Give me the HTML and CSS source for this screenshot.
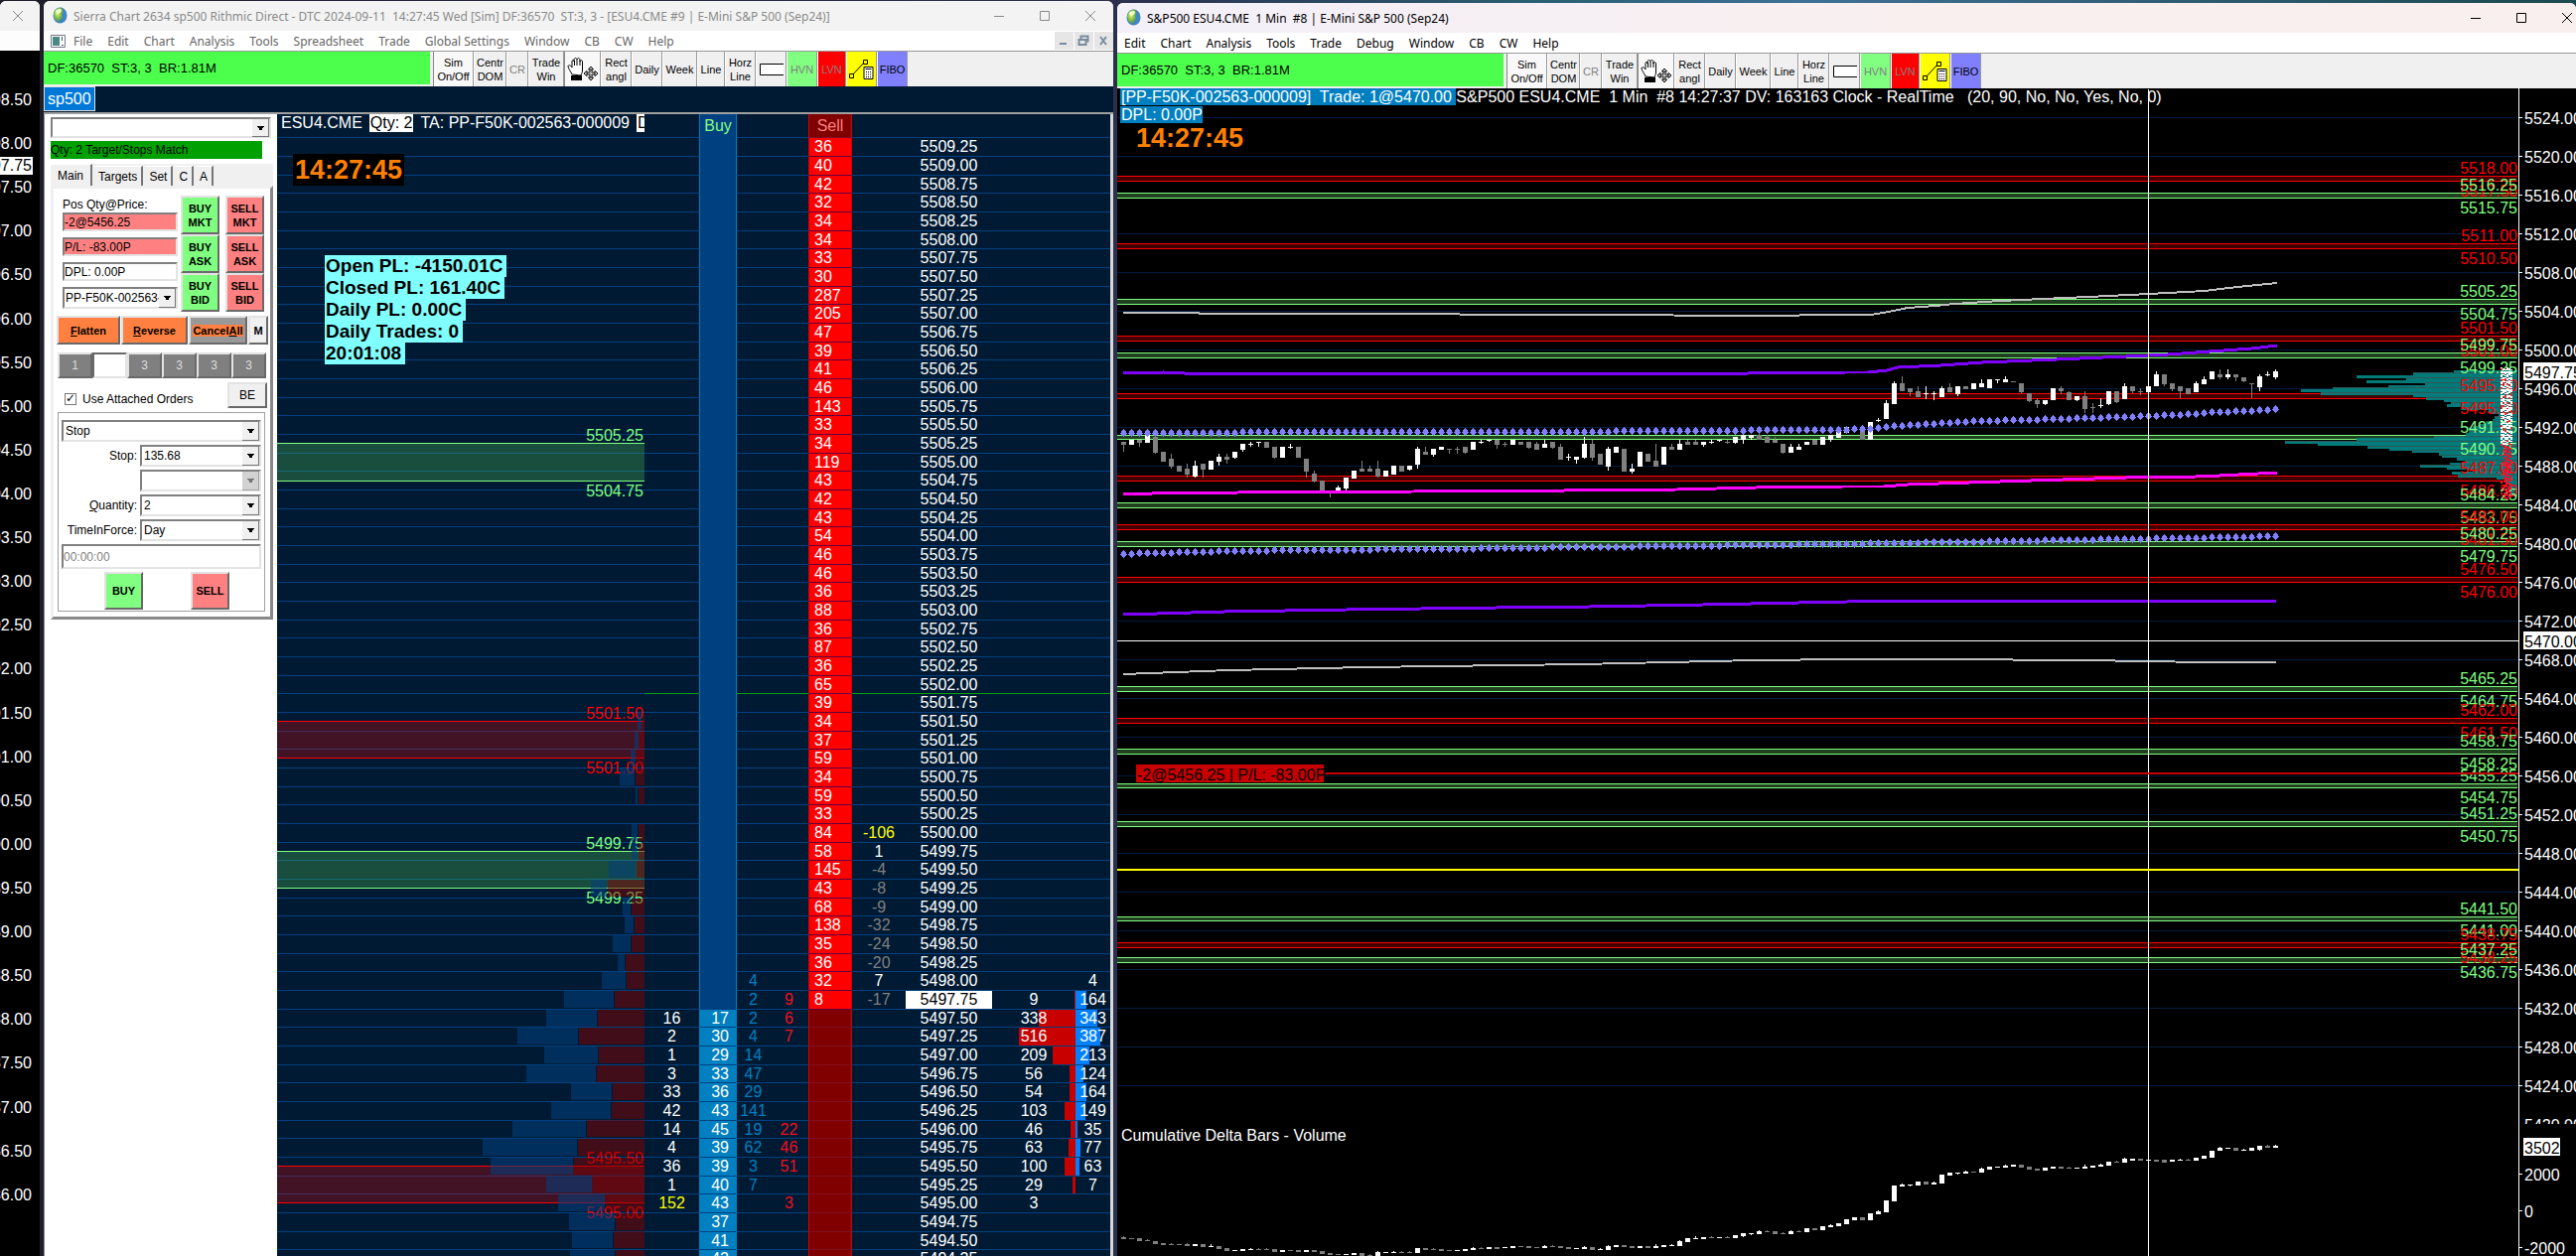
FILE: index.html
```html
<!DOCTYPE html>
<html lang="en">
<head>
<meta charset="utf-8">
<title>Sierra Chart</title>
<link rel="stylesheet" href="styles.css">
</head>
<body>
<svg class="defs" aria-hidden="true">
  <defs>
    <radialGradient id="globe-fill" cx=".4" cy=".35" r=".7"><stop offset="0" stop-color="#e8f8a0"/><stop offset=".45" stop-color="#8cc63f"/><stop offset="1" stop-color="#2f6db5"/></radialGradient>
    <symbol id="globe" viewBox="0 0 16 18"><ellipse cx="8.500" cy="8.500" rx="7" ry="8" fill="#3f86c9"/><path d="M2 7c1-5 5-7 9-6 2 2 1 5-1 6 2 2 1 6-2 9-4-1-6-5-6-9z" fill="url(#globe-fill)"/><path d="M4 4c2-2 5-3 6-1 0 2-3 4-5 4z" fill="#f3ffc8"/></symbol>
    <symbol id="hand" viewBox="0 0 32 26"><path d="M5 18C4 15 1 12 1 9.500 2 8 4 9 5 11V5c0-2 2-2 2 0V3c.5-2 2.500-2 3 0 .5-2 2.500-2 3 0v2c.5-2 2.500-1.500 2.500 0v9c0 2-1 3-1.500 5z" fill="#fff" stroke="#000"/><path d="M7.500 4v5M10 3v6M13 4v5" stroke="#000" fill="none"/><path d="M4 19h11v5H4z"/><path d="M24 11v12M18 17h12" stroke="#000" stroke-width="3"/><path d="M24 11v12M18 17h12" stroke="#fff"/><path d="M24 10l-2.500 3h5zM24 24l-2.500-3h5zM17 17l3-2.500v5zM31 17l-3-2.500v5z" fill="#fff" stroke="#000"/></symbol>
    <symbol id="box" viewBox="0 0 24 12"><path d="M24 .5H.5v11H24" fill="#fff" stroke="#000"/></symbol>
    <symbol id="calc" viewBox="0 0 26 22"><path d="M2 18L16 3" stroke="#000"/><path d="M.5 15.500h4v4h-4zM14.500 1.500h4v4h-4z" fill="#ff0" stroke="#000"/><path d="M15 8.500h9v12h-9z" fill="#fff" stroke="#000"/><path d="M16.500 10.500h6M17 13.500h1m1 0h1m1 0h1M17 16h1m1 0h1m1 0h1M17 18.500h1m1 0h1m1 0h1" stroke="#000"/></symbol>
    <symbol id="min" viewBox="0 0 12 12"><path d="M1 6.500h10" stroke="currentColor"/></symbol>
    <symbol id="max" viewBox="0 0 12 12"><path d="M1.500 1.500h9v9h-9z" stroke="currentColor" fill="none"/></symbol>
    <symbol id="close" viewBox="0 0 12 12"><path d="M1 1l10 10M11 1L1 11" stroke="currentColor"/></symbol>
    <symbol id="restore" viewBox="0 0 12 12"><path d="M3.500 4V1.500h7v5H8M1.500 5h7v5h-7z" stroke="currentColor" fill="none" stroke-width="2"/></symbol>
  </defs>
</svg>

<main class="desktop">
  <aside class="window sliver">
    <header class="titlebar"><svg class="glyph"><use href="#close"/></svg></header>
    <div class="sliver-menu"></div>
    <div class="sliver-scale">
      <ol id="sliver-labels"></ol>
      <span class="last-price">5497.75</span>
    </div>
  </aside>

  <section class="window trade-window">
    <header class="titlebar">
      <svg class="globe"><use href="#globe"/></svg>
      <h1>Sierra Chart 2634 sp500 Rithmic Direct - DTC 2024-09-11  14:27:45 Wed [Sim] DF:36570  ST:3, 3 - [ESU4.CME #9 | E-Mini S&amp;P 500 (Sep24)]</h1>
      <div class="window-controls">
        <button aria-label="Minimize"><svg class="glyph"><use href="#min"/></svg></button>
        <button aria-label="Maximize"><svg class="glyph"><use href="#max"/></svg></button>
        <button aria-label="Close"><svg class="glyph"><use href="#close"/></svg></button>
      </div>
    </header>
    <nav class="menubar">
      <svg class="doc" viewBox="0 0 15 13"><path d="M.5.5h14v12H.5z" fill="#fff" stroke="#778"/><path d="M2 2h7v9H2z" fill="#4a8a86"/><path d="M11 2h1v4h-1zM11 10h2v1h-2z" fill="#456"/></svg>
      <a href="#">File</a><a href="#">Edit</a><a href="#">Chart</a><a href="#">Analysis</a><a href="#">Tools</a><a href="#">Spreadsheet</a><a href="#">Trade</a><a href="#">Global Settings</a><a href="#">Window</a><a href="#">CB</a><a href="#">CW</a><a href="#">Help</a>
      <div class="child-controls">
        <button aria-label="Minimize chart"><svg class="glyph"><path d="M2 9h7" stroke="currentColor" stroke-width="2"/></svg></button>
        <button aria-label="Restore chart"><svg class="glyph"><use href="#restore"/></svg></button>
        <button aria-label="Close chart"><svg class="glyph"><path d="M3 2l6 8M9 2l-6 8" stroke="currentColor" stroke-width="2"/></svg></button>
      </div>
    </nav>
    <div class="toolbar">
      <output class="status">DF:36570  ST:3, 3  BR:1.81M</output>
      <button class="w41 on">Sim<br>On/Off</button><button class="w33">Centr<br>DOM</button><button class="w22" disabled>CR</button><button class="w36">Trade<br>Win</button><button class="w37 on" aria-label="Pan"><svg width="32" height="26"><use href="#hand"/></svg></button><button class="w31">Rect<br>angl</button><button class="w31">Daily</button><button class="w35">Week</button><button class="w28">Line</button><button class="w31">Horz<br>Line</button><button class="w31" aria-label="Rectangle"><svg width="24" height="12"><use href="#box"/></svg></button><button class="w31 hvn" disabled>HVN</button><button class="w29 lvn" disabled>LVN</button><button class="w31 calc" aria-label="Measure"><svg width="26" height="22"><use href="#calc"/></svg></button><button class="w31 fibo">FIBO</button>
    </div>
    <div class="book-tabs"><button>sp500</button></div>

    <div class="trade-body">
      <form class="panel">
        <span class="combo symbol"><select aria-label="Symbol"><option></option></select></span>
        <p class="match">Qty: 2 Target/Stops Match</p>
        <div class="tabs"><button type="button" class="active">Main</button><button type="button">Targets</button><button type="button">Set</button><button type="button">C</button><button type="button">A</button></div>
        <div class="sheet">
          <div class="position">
            <div class="fields">
              <label for="pos">Pos Qty@Price:</label>
              <input id="pos" class="red" value="-2@5456.25">
              <input class="red" aria-label="Profit and loss" value="P/L: -83.00P">
              <input aria-label="Daily profit and loss" value="DPL: 0.00P">
              <span class="combo"><select aria-label="Account"><option>PP-F50K-002563-000009</option></select></span>
            </div>
            <div class="orders">
              <button type="button" class="buy">BUY<br>MKT</button><button type="button" class="sell">SELL<br>MKT</button>
              <button type="button" class="buy">BUY<br>ASK</button><button type="button" class="sell">SELL<br>ASK</button>
              <button type="button" class="buy">BUY<br>BID</button><button type="button" class="sell">SELL<br>BID</button>
            </div>
          </div>
          <div class="actions">
            <button type="button" class="orange"><u>F</u>latten</button><button type="button" class="orange"><u>R</u>everse</button><button type="button" class="cancel"><span>Cancel<u>A</u>ll</span></button><button type="button" class="m">M</button>
          </div>
          <div class="sizes"><button type="button">1</button><button type="button" class="picked" aria-label="2"></button><button type="button">3</button><button type="button">3</button><button type="button">3</button><button type="button">3</button></div>
          <div class="attach"><input type="checkbox" id="attached" checked><label for="attached">Use Attached Orders</label><button type="button">BE</button></div>
          <div class="group">
            <span class="combo wide"><select aria-label="Order type"><option>Stop</option></select></span>
            <label for="stop">Stop:</label><span class="combo"><select id="stop"><option>135.68</option></select></span>
            <span></span><span class="combo off"><select aria-label="Second price" disabled><option></option></select></span>
            <label for="qty"><u>Q</u>uantity:</label><span class="combo"><select id="qty"><option>2</option></select></span>
            <label for="tif">TimeInForce:</label><span class="combo"><select id="tif"><option>Day</option></select></span>
            <input class="wide time" aria-label="Time" value="00:00:00">
            <div class="wide send"><button type="button" class="buy">BUY</button><button type="button" class="sell">SELL</button></div>
          </div>
        </div>
      </form>

      <div class="dom">
        <table class="ladder">
          <colgroup><col><col class="c55"><col class="c38"><col class="c33"><col class="c39"><col class="c44"><col class="c54"><col class="c87"><col class="c84"><col class="c35"></colgroup>
          <thead><tr><th></th><th></th><th class="buy-col">Buy</th><th></th><th></th><th class="sell-col">Sell</th><th></th><th></th><th></th><th></th></tr></thead>
          <tbody id="ladder-rows"></tbody>
        </table>
        <svg id="profile" class="overlay" viewBox="279 115 839 1150" preserveAspectRatio="xMinYMin slice"></svg>
        <p class="dom-head">ESU4.CME <mark>Qty: 2</mark> TA: PP-F50K-002563-000009 <mark class="cut">DPL</mark></p>
        <time class="clock dom-clock">14:27:45</time>
        <ul class="pl"><li>Open PL: -4150.01C</li><li>Closed PL: 161.40C</li><li>Daily PL: 0.00C</li><li>Daily Trades: 0</li><li>20:01:08</li></ul>
      </div>
    </div>
  </section>

  <section class="window chart-window">
    <header class="titlebar">
      <svg class="globe"><use href="#globe"/></svg>
      <h2>S&amp;P500 ESU4.CME  1 Min  #8 | E-Mini S&amp;P 500 (Sep24)</h2>
      <div class="window-controls">
        <button aria-label="Minimize"><svg class="glyph"><use href="#min"/></svg></button>
        <button aria-label="Maximize"><svg class="glyph"><use href="#max"/></svg></button>
        <button aria-label="Close"><svg class="glyph"><use href="#close"/></svg></button>
      </div>
    </header>
    <nav class="menubar"><a href="#">Edit</a><a href="#">Chart</a><a href="#">Analysis</a><a href="#">Tools</a><a href="#">Trade</a><a href="#">Debug</a><a href="#">Window</a><a href="#">CB</a><a href="#">CW</a><a href="#">Help</a></nav>
    <div class="toolbar">
      <output class="status">DF:36570  ST:3, 3  BR:1.81M</output>
      <button class="w41 on">Sim<br>On/Off</button><button class="w33">Centr<br>DOM</button><button class="w22" disabled>CR</button><button class="w36">Trade<br>Win</button><button class="w37 on" aria-label="Pan"><svg width="32" height="26"><use href="#hand"/></svg></button><button class="w31">Rect<br>angl</button><button class="w31">Daily</button><button class="w35">Week</button><button class="w28">Line</button><button class="w31">Horz<br>Line</button><button class="w31" aria-label="Rectangle"><svg width="24" height="12"><use href="#box"/></svg></button><button class="w31 hvn" disabled>HVN</button><button class="w29 lvn" disabled>LVN</button><button class="w31 calc" aria-label="Measure"><svg width="26" height="22"><use href="#calc"/></svg></button><button class="w31 fibo">FIBO</button>
    </div>
    <div class="chart">
      <svg id="chart" class="overlay" viewBox="1125 89 1469 1176" preserveAspectRatio="xMinYMin slice"></svg>
      <div class="chart-head">
        <p><mark>[PP-F50K-002563-000009]  Trade: 1@5470.00 </mark>S&amp;P500 ESU4.CME  1 Min  #8 14:27:37 DV: 163163 Clock - RealTime   (20, 90, No, No, Yes, No, 0)</p>
        <p><mark>DPL: 0.00P</mark></p>
        <time class="clock">14:27:45</time>
      </div>
    </div>
  </section>
</main>
<script src="app.js"></script>
</body>
</html>
```
FILE: styles.css
```css
* { box-sizing: border-box; margin: 0; padding: 0; }
html, body { height: 100%; overflow: hidden; }
body { font: 12px "Liberation Sans", Arial, sans-serif; color: #000; background: linear-gradient(90deg, #1d1d2c, #2c2f4d 43%, #2a6075 60%, #3f7096 70%, #1c4a4f); }
button, input, select { font: inherit; color: inherit; border: 0; border-radius: 0; background: none; }
a { color: inherit; text-decoration: none; }
ol, ul { list-style: none; }
.defs { position: absolute; width: 0; height: 0; }
.glyph { display: block; width: 12px; height: 12px; fill: none; }

.desktop { height: 100vh; display: grid; grid-template-columns: 40px minmax(0, 1077fr) minmax(0, 1469fr); gap: 4px; }
.window { display: flex; flex-direction: column; min-height: 0; overflow: hidden; margin-top: 1px; border-radius: 6px 6px 0 0; background: #fff; }
.titlebar { flex: none; display: flex; align-items: center; height: 30px; background: #f3f3f3; color: #8a8a8a; font: 12px "Noto Sans", "Open Sans", sans-serif; }
.titlebar h1, .titlebar h2 { flex: 1; font: inherit; white-space: pre; }
.globe { width: 16px; height: 18px; margin: 0 6px 0 8px; }
.window-controls { display: flex; }
.window-controls button { width: 46px; height: 30px; display: grid; place-items: center; }

.sliver .titlebar { padding-left: 12px; }
.sliver-menu { flex: none; height: 20px; background: #fdfdfd; }
.sliver-scale { position: relative; flex: 1; display: flex; background: #000; color: #fff; font-size: 16px; padding: 28px 0 39px; }
.sliver-scale ol { flex: 1; min-width: 0; display: flex; flex-direction: column; }
.sliver-scale li { flex: 1; display: flex; align-items: center; justify-content: flex-end; padding-right: 8px; }
.last-price { position: absolute; top: 107px; right: 7px; padding-right: 1px; line-height: 18px; background: #fff; color: #000; }

.menubar { flex: none; display: flex; align-items: center; gap: 15px; height: 20px; padding-left: 7px; color: #666; font: 12px "Noto Sans", "Open Sans", sans-serif; white-space: nowrap; }
.doc { width: 15px; height: 13px; margin-right: -7px; }
.child-controls { margin-left: auto; display: flex; gap: 1px; }
.child-controls button { width: 19px; height: 18px; padding: 3px; background: #e6e6e6; color: #7b8ba0; }

.toolbar { flex: none; display: flex; height: 36px; background: #f0f0f0; border-top: 1px solid #999; font-size: 11px; line-height: 14px; }
.status { width: 389px; margin: 0 3px 2px 0; padding-left: 4px; background: #4dff4d; font-size: 13px; line-height: 34px; white-space: pre; }
.toolbar button { flex: none; display: grid; place-items: center; align-content: center; border-right: 1px solid #999; border-left: 1px solid #fff; background: #f0f0f0; }
.toolbar button:disabled { color: #808080; }
.toolbar .on { background: #f8f8f8; border-left-color: #888; }
.toolbar .hvn { background: #80ff80; }
.toolbar .lvn { background: #f00; }
.toolbar .calc { background: #ff0; }
.toolbar .fibo { background: #8080ff; }
.w22 { width: 22px; } .w28 { width: 28px; } .w29 { width: 29px; } .w31 { width: 31px; } .w33 { width: 33px; }
.w35 { width: 35px; } .w36 { width: 36px; } .w37 { width: 37px; } .w41 { width: 41px; }

.book-tabs { flex: none; height: 28px; background: #001a33; border-bottom: 2px solid #a0a0a0; }
.book-tabs button { height: 25px; padding: 0 3px; border: 1px solid #ddd; background: #0078d7; color: #fff; font-size: 16px; }
.trade-body { flex: 1; min-height: 0; display: grid; grid-template-columns: 235px minmax(0, 1fr); border-right: 3px solid #d8d8d8; }

/* order entry panel */
.panel { background: #fff; padding: 3px 4px 0 6px; border-left: 1px solid #888; overflow: hidden; }
.combo { position: relative; display: block; height: 22px; background: #fff; border: 2px solid; border-color: #808080 #e3e3e3 #e3e3e3 #808080; }
.combo select { display: block; width: 100%; height: 100%; padding: 0 16px 0 2px; appearance: none; }
.combo::after { content: ""; position: absolute; top: 0; right: 0; width: 16px; height: 100%; border-right: 1px solid #777; border-bottom: 1px solid #777; background: linear-gradient(#000, #000) 50% 7px / 7px 1px no-repeat, linear-gradient(#000, #000) 50% 8px / 5px 1px no-repeat, linear-gradient(#000, #000) 50% 9px / 3px 2px no-repeat, #f0f0f0; pointer-events: none; }
.combo.off::after { filter: contrast(.3) brightness(1.3); }
.symbol { width: 222px; height: 21px; }
.match { width: 213px; height: 18px; margin-top: 3px; background: #00a000; line-height: 18px; }
.tabs { display: flex; align-items: flex-end; gap: 2px; height: 22px; margin-top: 5px; background: #f0f0f0; }
.tabs button { height: 20px; padding: 0 4px; border-right: 2px solid #777; border-top: 1px solid #fff; }
.tabs .active { height: 22px; padding: 0 7px; }
.sheet { border: 3px solid #f0f0f0; border-right-color: #888; border-bottom-color: #888; height: 437px; padding: 7px 2px 0 3px; }
.position { display: grid; grid-template-columns: 116px 83px; gap: 4px; padding-left: 6px; }
.fields { display: flex; flex-direction: column; gap: 6px; padding-top: 2px; }
.fields label { line-height: 14px; margin-bottom: -5px; }
.fields input, .time { height: 19px; border: 2px solid; border-color: #808080 #e3e3e3 #e3e3e3 #808080; }
.fields .combo select { padding-left: 1px; }
.red { background: #ff8080; }
.orders { display: grid; grid-template-columns: 39px 39px; gap: 0 6px; margin-left: -1px; }
.orders button { height: 39px; }
.orders button, .send button { border: 2px solid; border-color: #e3e3e3 #696969 #696969 #e3e3e3; font-size: 11px; font-weight: bold; line-height: 14px; }
.buy { background: #80ff80; }
.sell { background: #ff8080; }
.actions { display: grid; grid-template-columns: 64px 67px 59px 20px; margin-top: 4px; gap: 1px; height: 29px; font-weight: bold; }
.actions button, .sizes button, .attach button { border: 2px solid; border-color: #e3e3e3 #696969 #696969 #e3e3e3; white-space: nowrap; background: #f0f0f0; }
.actions button { font-weight: bold; font-size: 11px; }
.actions .orange { background: #ff8040; }
.actions .cancel { background: #999; }
.cancel span { background: #ff8040; }
.sizes { display: grid; grid-template-columns: repeat(6, 35px); height: 26px; margin: 8px 0 0 1px; }
.sizes button { background: #808080; color: #ddd; }
.sizes .picked { background: #fff; border-color: #696969 #e3e3e3 #e3e3e3 #696969; }
.attach { display: flex; align-items: center; height: 26px; margin: 4px 0 0 8px; }
.attach input { appearance: none; width: 12px; height: 12px; margin: 8px 6px 0 0; border: 1px solid #777; position: relative; }
.attach input:checked::after { content: "✓"; position: absolute; inset: -2px 0 0 0; font: bold 12px/12px "DejaVu Sans", sans-serif; }
.attach label { flex: 1; padding-top: 8px; }
.attach button { width: 40px; height: 26px; margin-right: 1px; }
.group { display: grid; grid-template-columns: 76px 122px; gap: 3px; margin: 4px 0 0 1px; width: 209px; height: 201px; padding: 7px 3px 0; border: 1px solid #a0a0a0; align-content: start; align-items: center; }
.group label { text-align: right; white-space: nowrap; }
.wide { grid-column: 1 / -1; }
.time { height: 25px; color: #808080; }
.send { display: flex; justify-content: space-between; padding: 0 32px 0 43px; }
.send button { width: 39px; height: 38px; }

/* price ladder */
.dom { position: relative; overflow: hidden; background: #001a33; color: #fff; font-size: 16px; }
.overlay { position: absolute; inset: 0; width: 100%; height: 100%; pointer-events: none; }
.overlay text { font: 16px "Liberation Sans", Arial, sans-serif; dominant-baseline: central; }
.ladder { width: 100%; table-layout: fixed; border-spacing: 0; border-collapse: separate; }
.ladder th { height: 24px; font-weight: normal; border-bottom: 1px solid #004080; }
.ladder td { height: 19px; line-height: 18px; text-align: center; border-bottom: 1px solid #004080; position: relative; }
.ladder tr:nth-child(3n) td { height: 18px; line-height: 17px; }
.c33 { width: 33px; } .c35 { width: 35px; } .c38 { width: 38px; } .c39 { width: 39px; } .c44 { width: 44px; }
.c54 { width: 54px; } .c55 { width: 55px; } .c84 { width: 84px; } .c87 { width: 87px; }
.ladder .buy-col { background: #004080; border-left: 1px solid #0080c0; border-right: 1px solid #0080c0; color: #80ff80; }
.ladder td.buy-col { color: #fff; text-align: right; padding-right: 7px; }
.ladder .bid { background: #0080c0; }
.ladder .sell-col { background: #800000; border-left: 1px solid #d00000; border-right: 1px solid #d00000; border-bottom-color: #801020; color: #ff8080; }
.ladder td.sell-col { color: #fff; text-align: left; padding-left: 5px; }
.ladder .ask { background: #f00; border-bottom-color: #600040; }
.blue { color: #0080c0; }
.crimson { color: #f01020; }
.gray { color: #808080; }
.yellow { color: #ff0; }
.ladder .last { background: #fff; color: #000; }
.bar { position: absolute; top: 0; bottom: 0; }
.bar.sold { right: 0; background: #c80000; }
.bar.bought { left: 0; background: #0080ff; }
.num { position: relative; }
.dom-head { position: absolute; top: 0; left: 4px; width: 366px; overflow: hidden; white-space: nowrap; line-height: 18px; display: flex; gap: 7px; }
.dom-head mark { background: #fff; padding: 0 1px; }
.clock { display: block; width: max-content; padding: 0 2px; color: #ff8000; background: #000; font-size: 27px; font-weight: bold; line-height: 32px; }
.dom-clock { position: absolute; left: 16px; top: 40px; }
.pl { position: absolute; left: 48px; top: 142px; color: #000; font-size: 19px; font-weight: bold; line-height: 22px; }
.pl li { width: max-content; padding: 0 4px 0 1px; background: #80ffff; }

/* price chart window */
.chart-window { margin-top: 3px; }
.chart-window .titlebar { background: linear-gradient(90deg, #f3f0f9, #f9efef 55%); color: #000; }
.chart-window .window-controls { margin-right: -14px; }
.chart-window .menubar { color: #000; }
.chart { position: relative; flex: 1; min-height: 0; overflow: hidden; background: #000; color: #fff; font-size: 16px; }
.chart-head { position: relative; padding-left: 3px; line-height: 18px; }
.chart-head p { white-space: pre; }
.chart-head mark { background: #0080c0; color: #fff; padding-left: 1px; }
.chart-head .clock { margin-left: 14px; background: none; line-height: 28px; }
```
FILE: app.js
```js
const NS = 'http://www.w3.org/2000/svg';
const add = (svg, tag, attrs, text) => {
  const el = document.createElementNS(NS, tag);
  for (const k in attrs) el.setAttribute(k, attrs[k]);
  if (text !== undefined) el.textContent = text;
  svg.appendChild(el);
  return el;
};
const rect = (svg, x, y, w, h, fill, extra) => add(svg, 'rect', { x, y, width: w, height: h, fill, 'shape-rendering': 'crispEdges', ...extra });
const label = (svg, x, y, text, fill, anchor) => add(svg, 'text', { x, y: y + 1, fill, 'text-anchor': anchor || 'start' }, text);
const RED = '#ff0000', GREEN = '#80ff80';

/* left window scale */
const scale = document.getElementById('sliver-labels');
for (let i = 0; i < 26; i++) {
  const li = document.createElement('li');
  li.textContent = (5498.5 - i * 0.5).toFixed(2);
  scale.appendChild(li);
}

/* ladder rows */
const asks = [36, 40, 42, 32, 34, 34, 33, 30, 287, 205, 47, 39, 41, 46, 143, 33, 34, 119, 43, 42, 43, 54, 46, 46, 36, 88, 36, 87, 36, 65, 39, 34, 37, 59, 34, 59, 33, 84, 58, 145, 43, 68, 138, 35, 36, 32, 8];
const bids = [17, 30, 29, 33, 36, 43, 45, 39, 39, 40, 43, 37, 41, 42];
const pulls = [16, 2, 1, 3, 33, 42, 14, 4, 36, 1, 152];
const delta = [-106, 1, -4, -8, -9, -32, -24, -20, 7, -17];
const bidHits = { 45: 4, 46: 2, 47: 2, 48: 4, 49: 14, 50: 47, 51: 29, 52: 141, 53: 19, 54: 62, 55: 3, 56: 7 };
const askHits = { 46: 9, 47: 6, 48: 7, 53: 22, 54: 46, 55: 51, 57: 3 };
const sold = [9, 338, 516, 209, 56, 54, 103, 46, 63, 100, 29, 3];
const bought = [4, 164, 343, 387, 213, 124, 164, 149, 35, 77, 63, 7];
const rows = document.getElementById('ladder-rows');
for (let i = 0; i < 61; i++) {
  const tr = rows.insertRow();
  const cell = (text, cls) => {
    const td = tr.insertCell();
    if (cls) td.className = cls;
    if (text !== undefined) td.textContent = text;
    return td;
  };
  const volume = (v, side, unit) => {
    const td = cell();
    if (v === undefined) return;
    td.innerHTML = `<i class="bar ${side}" style="width:${Math.round(v * unit)}px"></i><span class="num">${v}</span>`;
  };
  const below = i - 47;
  cell();
  cell(pulls[below], pulls[below] === 152 ? 'yellow' : '');
  cell(bids[below], below >= 0 ? 'buy-col bid' : 'buy-col');
  cell(bidHits[i], 'blue');
  cell(askHits[i], 'crimson');
  cell(asks[i], i < 47 ? 'sell-col ask' : 'sell-col');
  const d = delta[i - 37];
  cell(d, d === -106 ? 'yellow' : d < 0 ? 'gray' : '');
  cell((5509.25 - i * 0.25).toFixed(2), i === 46 ? 'last' : '');
  volume(sold[i - 46], 'sold', 0.11);
  volume(bought[i - 45], 'bought', 0.065);
}

/* zones and volume profile over the ladder */
const prof = document.getElementById('profile');
const rowY = p => Math.round(148 + (5509.25 - p) * 74.6);
for (const [hi, lo, c] of [[5505.25, 5504.75, GREEN], [5501.5, 5501, RED], [5499.75, 5499.25, GREEN], [5495.5, 5495, RED]]) {
  const a = rowY(hi), b = rowY(lo);
  rect(prof, 279, a, 370, b - a, c === RED ? '#ff0000' : '#60e060', { opacity: 0.26 });
  rect(prof, 279, a, 370, 1, c);
  rect(prof, 279, b, 370, 1, c);
  label(prof, 648, a - 9, hi.toFixed(2), c, 'end');
  label(prof, 648, b + 9, lo.toFixed(2), c, 'end');
}
const volumes = [[13, 4], [19, 9], [25, 15], [46, 17], [17, 11], null, [24, 11], [24, 11], [65, 15], [98, 68], [41, 24], [37, 18], [59, 24], [50, 34], [79, 32], [147, 55], [181, 85], [233, 121], [185, 83], [217, 87], [134, 58], [171, 61], [242, 105], [297, 123], [283, 130], [180, 94], [159, 72], [139, 53], [133, 56], [136, 53]];
volumes.forEach((v, i) => {
  if (!v) return;
  const y = rowY(5501.5 - i * 0.25) - 8, w = Math.round(v[0] / 1.823), r = Math.round(v[1] / 1.823);
  rect(prof, 649 - w, y, w - r - 1, 17, '#004080', { opacity: 0.55 });
  rect(prof, 649 - r, y, r, 17, '#800000', { opacity: 0.5 });
});
rect(prof, 649, 698, 55, 1, '#00a010');
rect(prof, 742, 698, 72, 1, '#00a010');
rect(prof, 858, 698, 260, 1, '#00a010');

/* price chart */
const svg = document.getElementById('chart');
const Y = p => Math.round(118.4 + (5524 - p) * 9.747);
for (let p = 5524; p >= 5424; p -= 4) rect(svg, 1125, Y(p), 1411, 1, '#001c40');

const bands = [[5518, 5517.5, RED], [5516.25, 5515.75, GREEN], [5511, 5510.5, RED], [5505.25, 5504.75, GREEN], [5501.5, 5501, RED], [5499.75, 5499.25, GREEN], [5495.5, 5495, RED], [5491.25, 5490.75, GREEN], [5487, 5486.5, RED], [5484.25, 5483.75, GREEN], [5482, 5481.5, RED], [5480.25, 5479.75, GREEN], [5476.5, 5476, RED], [5465.25, 5464.75, GREEN], [5462, 5461.5, RED], [5458.75, 5458.25, GREEN], [5455.25, 5454.75, GREEN], [5451.25, 5450.75, GREEN], [5441.5, 5441, GREEN], [5438.75, 5438.25, RED], [5437.25, 5436.75, GREEN]];
for (const [hi, lo, c] of bands) {
  const a = Y(hi), b = Y(lo);
  rect(svg, 1125, a, 1410, b - a, c === RED ? '#400000' : '#204020');
  rect(svg, 1125, a, 1410, 1, c);
  rect(svg, 1125, b, 1410, 1, c);
}

/* right-hand volume profile: left edge of each quarter-point row */
const edges = [543, 420, 249, 399, 279, 456, 345, 177, 81, 141, 420, 459, 513, 535, 522, 565, 648, 650, 679, 665, 660, 640, 620, 600, 588, 588, 580, 483, 249, 33, 132, 282, 348, 417, 498, 507, 552, 576, 531, 441, 522, 600, 537, 555, 672, 700, 705, 708, 712, 715, 715, 720];
edges.forEach((e, i) => {
  const x = Math.round(2290 + e / 3), y = Math.round(373 + i * 2.437);
  rect(svg, x, y, 2535 - x, 3, '#008080', { opacity: 0.95 });
  if (i % 2) rect(svg, x, y, 2535 - x, 1, '#305858');
});

/* studies */
const A = (x, y) => [1120 + x / 2.119, 280 + y / 2.8];
const B = (x, y) => [1860 + x / 2.136, y / 3];
const curve = (pts, color, w) => add(svg, 'polyline', { points: pts.map(p => p.map(Math.round).join()).join(' '), fill: 'none', stroke: color, 'stroke-width': w, 'shape-rendering': 'crispEdges' });
curve([A(24, 98), A(180, 99), A(190, 101), A(450, 102), A(1028, 104), A(1367, 106), A(1568, 104), B(52, 951), B(90, 941), B(130, 931), B(190, 925), B(230, 917), B(330, 908), B(420, 902), B(520, 896), B(650, 887), B(770, 878), B(820, 869), B(860, 863), B(924, 854)], '#c0c0c0', 2);
curve([A(24, 269), A(110, 267), A(155, 270), A(1356, 270), A(1568, 267), B(44, 1125), B(85, 1120), B(110, 1109), B(200, 1104), B(290, 1094), B(450, 1086), B(600, 1077), B(690, 1071), B(780, 1062), B(870, 1053), B(924, 1045)], '#8000ff', 3);
curve([A(24, 948), A(240, 940), A(500, 934), A(820, 929), A(1020, 927), A(1260, 920), A(1568, 914), [2100, 605], [2292, 605]], '#8000ff', 3);
curve([A(24, 1118), A(250, 1106), A(540, 1098), A(1000, 1089), A(1370, 1079), A(1568, 1075), [1950, 664], [2100, 665], [2220, 667], [2292, 667]], '#c0c0c0', 2);

/* candles: colour, high, body top, body bottom, low */
const early = 'g462,462,470,490 w455,455,470,470 g455,455,465,475 w443,443,465,465 g448,448,493,496 g490,490,518,518 g496,510,532,538 g529,529,546,546 g524,538,554,562 w515,529,560,563 g524,524,540,563 w515,515,540,540 w496,504,518,530 g496,504,512,524 w490,490,507,510 w468,468,484,490 w462,468,470,476 w462,462,465,476 g462,462,479,479 g476,476,507,510 w476,476,507,507 w468,476,479,482 g476,476,507,507 g510,510,546,563 g543,552,574,577 g571,571,602,602 g600,600,604,619 w585,591,602,602 w563,563,594,599 w543,543,566,566 g515,538,546,546 g529,538,546,546 g515,538,560,563 w543,543,560,560 w529,529,554,554 g529,529,546,546 w529,529,540,543 w476,482,526,538 g476,490,498,498 w482,482,498,504 w476,476,484,484 g482,482,484,496 g476,482,484,496 g476,476,493,496 w462,462,484,484 w455,462,465,468 w455,455,457,462 g455,455,470,482 g462,468,470,476 w455,455,470,470 g462,462,470,470 g462,462,479,482 g462,468,484,484 w455,468,479,479 g462,462,479,482 g468,476,512,512 w496,504,507,515 w504,504,512,524 w448,468,507,510 g455,468,507,515 g496,496,526,526 w476,482,532,543 w476,476,493,493 g482,482,546,546 w524,538,546,552 w490,490,532,532 g496,496,518,518 g468,515,532,532 w476,476,526,526 g468,476,484,484 w455,468,484,484 g455,462,470,470 g455,462,470,470 w462,462,470,476 w455,462,465,468 w455,455,457,462 g455,462,465,468 w448,448,465,468 w443,443,455,468 w443,443,451,455 g436,443,455,455 g443,448,465,465 g448,455,465,465 g468,468,493,496 w468,476,493,493 w468,476,484,484 w462,462,470,470 g455,455,470,470 w448,448,470,470 w443,443,455,462 w430,432,451,451';
const late = 'w1290,1290,1308,1308 g1290,1290,1296,1296 g1295,1295,1328,1328 w1275,1275,1328,1328 w1262,1269,1271,1276 w1209,1218,1266,1266 w1152,1158,1221,1221 g1137,1158,1182,1182 g1173,1173,1185,1197 g1167,1182,1200,1200 w1167,1188,1191,1206 w1182,1188,1191,1209 w1167,1173,1200,1200 g1158,1170,1185,1185 w1167,1167,1191,1197 g1167,1167,1176,1176 w1158,1158,1176,1176 w1146,1158,1170,1170 w1146,1146,1173,1173 w1146,1146,1149,1158 w1137,1146,1155,1155 g1152,1152,1156,1156 g1158,1158,1185,1188 g1188,1188,1212,1215 g1203,1209,1221,1233 w1209,1209,1221,1224 w1173,1173,1209,1209 g1167,1173,1182,1191 g1182,1185,1209,1209 w1197,1197,1209,1212 g1182,1197,1236,1248 g1218,1230,1233,1248 w1203,1224,1227,1233 w1182,1182,1221,1224 g1182,1182,1215,1218 w1158,1167,1206,1206 g1167,1167,1182,1188 g1173,1182,1185,1195 w1167,1167,1185,1185 w1122,1131,1167,1167 g1131,1131,1161,1167 g1158,1158,1176,1182 g1167,1167,1182,1203 g1173,1173,1191,1191 w1152,1158,1185,1185 w1137,1146,1161,1161 w1122,1122,1146,1146 g1116,1131,1140,1146 w1116,1131,1140,1146 g1131,1131,1140,1152 g1140,1140,1152,1155 g1158,1158,1161,1203 w1131,1137,1170,1182 w1122,1130,1133,1137 w1116,1122,1140,1146';
const candle = (i, c, hi, top, bot, lo) => {
  const x = 1131 + 8 * i, fill = c === 'w' ? '#fff' : '#808080';
  const r = Math.round;
  rect(svg, x, r(hi), 1, Math.max(1, r(lo) - r(hi)), fill);
  rect(svg, x - 2, r(top), 5, Math.max(1, r(bot) - r(top)), fill);
};
early.split(' ').forEach((s, i) => candle(i, s[0], ...s.slice(1).split(',').map(v => 280 + v / 2.8)));
late.split(' ').forEach((s, i) => candle(91 + i, s[0], ...s.slice(1).split(',').map(v => v / 3)));

curve([A(24, 609), A(85, 607), A(270, 604), A(645, 603), A(650, 600), A(965, 599), A(1205, 595), A(1375, 591), A(1560, 589), B(78, 1470), B(130, 1463), B(330, 1455), B(600, 1444), B(750, 1440), B(800, 1436), B(924, 1429)], '#ff00ff', 3);

const dots = pts => {
  let k = 0;
  for (let i = 0; i < 146; i++) {
    const x = 1131 + 8 * i;
    while (k < pts.length - 2 && pts[k + 1][0] < x) k++;
    const [x0, y0] = pts[k], [x1, y1] = pts[k + 1];
    const y = Math.round(y0 + (y1 - y0) * (x - x0) / (x1 - x0));
    add(svg, 'path', { d: `M${x - 3} ${y}h1v-2h1v-1h1v-1h1v1h1v1h1v2h1v1h-1v1h-1v1h-1v1h-1v-1h-1v-1h-1v-1h-1z`, fill: '#8080ff' });
  }
};
dots([A(24, 436), A(260, 436), A(290, 434), A(1050, 434), A(1075, 431), A(1350, 431), A(1360, 428), A(1568, 427), B(50, 1296), B(100, 1287), B(170, 1281), B(290, 1272), B(370, 1269), B(460, 1266), B(590, 1260), B(700, 1254), B(800, 1245), B(860, 1242), B(924, 1236)]);
dots([A(24, 778), A(160, 773), A(270, 770), A(420, 767), A(650, 765), A(890, 761), A(1060, 758), A(1250, 756), A(1380, 753), A(1568, 750), [2200, 542], [2292, 540]]);

/* cumulative delta: colour, body top, body bottom, wick end */
const cum = 'g438,444,435 g441,444 g441,450 g447,450,444 g450,459 g456,462 g459,462,456 g459,462 g459,465,456 w459,465 g459,468 w465,468,459 g465,474 g471,480 w477,480 w474,480 w474,477,471 g474,477,471 g474,477,471 g474,483 w477,483 g477,480 g477,483 w477,483 g477,483 g480,489 g486,492 g489,492 w489,492 w486,492 g486,495 g491,495,489 w483,495,480 w483,486 w483,486,480 g483,486,480 g483,486,480 w471,486 g471,477 g474,477,471 g474,480 g477,480 w477,480 w474,480 w471,477,468 g471,474,468 w468,474 g468,474 w468,471 w465,471 g465,468 g465,471 g468,471 w465,471,462 g465,468,462 g465,471 g468,474 w471,474 w468,474,465 g468,477 w474,477,471 w465,477,462 w462,468 g462,468 g465,471 w465,471 g465,471 w465,471,459 w462,468 w462,465,459 w450,465,447 w441,453 w441,444,435 w438,444 g438,441,435 w438,441 g438,441,435 w432,441 w426,435,438 w426,429,432 w420,429,417 g420,423,417 g420,429 g426,429,423 w420,429,417 g420,423,417 w411,423 g411,417 w405,417 w402,408,399 w396,405 w384,399 w378,387 g378,387 w366,387 w360,369,357 w327,363 w282,330 w279,285,276 w279,282,285 w270,282 g270,279 w273,279,270 w249,276 w243,252 w243,246,249 w240,246,237 g240,243 w231,243,228 w225,234 w225,228 w222,228,219 w219,225 g219,228 g225,234 g231,237 w228,237 w225,231 g225,231 g228,231,225 w228,231 w225,231,219 w222,228 w219,225,216 w210,222 g210,213,207 w201,213,198 w201,207 g201,207 w204,207 g204,210 g204,213 w204,210 w204,207,201 g204,207,201 w198,207 w192,201 w177,198 w168,177,165 w168,171 g168,177 w174,177,171 w168,177 w162,174,177 g162,168,159 w162,168,159';
cum.split(' ').forEach((s, i) => {
  const [top, bot, end] = s.slice(1).split(',').map(v => 1100 + v / 3);
  const e = end === undefined ? top : end;
  candle(i, s[0], Math.min(top, e), top, bot, Math.max(bot, e));
});

/* crosshair, position line and marked levels */
rect(svg, 1125, 645, 1411, 1, '#fff');
rect(svg, 2163, 90, 1, 1175, '#fff');
rect(svg, 1125, 875, 1411, 2, '#ff0');

for (const [hi, lo, c] of bands) {
  label(svg, 2535, Y(hi) - 9, hi.toFixed(2), c, 'end');
  label(svg, 2535, Y(lo) + 9, lo.toFixed(2), c, 'end');
}
const speck = (x, y1, y2, color, dash) => add(svg, 'path', { d: `M${x} ${y1}V${y2}`, stroke: color, 'stroke-width': 2, 'stroke-dasharray': dash, fill: 'none' });
for (let k = 0; k < 6; k++) {
  speck(2519 + k * 2, 370 + k % 3, 448, '#fff', ['3 1 2 1', '2 1 4 2', '1 1 3 1'][k % 3]);
  speck(2519 + k * 2, 371 + k * 5, 500, '#e03030', ['2 9 1 7', '1 8 2 12', '3 14'][k % 3]);
}
for (let k = 0; k < 4; k++) speck(2522 + k * 2, 448 + k, 503, '#f01030', ['3 1 2 2', '2 2 3 1'][k % 2]);

rect(svg, 1333, 778, 1203, 2, '#c80000');
rect(svg, 1144, 770, 189, 18, '#c80000');
label(svg, 1145, 779, '-2@5456.25 | P/L: -83.00P', '#000');

/* axis */
rect(svg, 2536, 89, 1, 1176, '#fff');
for (let p = 5524; p >= 5424; p -= 4) {
  rect(svg, 2537, Y(p), 3, 1, '#fff');
  label(svg, 2542, Y(p), p.toFixed(2), '#fff');
}
label(svg, 2542, 1132, '5420.00', '#fff');
rect(svg, 2538, 1132, 56, 12, '#000');
const tag = (y, text, w) => { rect(svg, 2541, y - 9, w, 18, '#fff'); label(svg, 2542, y, text, '#000'); };
tag(374, '5497.75', 60);
tag(645, '5470.00', 60);
tag(1155, '3502', 37);
[[1182, '2000'], [1219, '0'], [1256, '-2000']].forEach(([y, t]) => {
  rect(svg, 2537, y, 3, 1, '#fff');
  label(svg, 2542, y, t, '#fff');
});
label(svg, 1129, 1142, 'Cumulative Delta Bars - Volume', '#fff');
```
